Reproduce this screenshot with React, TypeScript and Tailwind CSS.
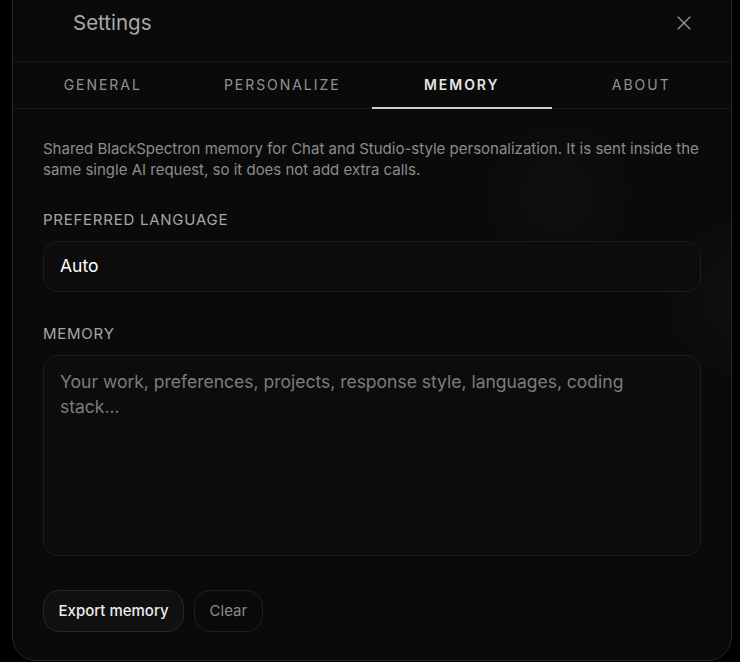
import { X } from "lucide-react";

const TABS = ["General", "Personalize", "Memory", "About"];

export default function App() {
    const active = "Memory";

    return (
        <div className="relative h-[662px] w-[740px] overflow-hidden bg-black font-['Inter','Liberation_Sans',sans-serif]">
            <div className="relative -mt-[21px] ml-3 flex w-[720px] flex-col overflow-hidden rounded-[24px] border border-[#232323] bg-[#0a0a0a]">
                {/* soft glows */}
                <div className="pointer-events-none absolute left-[510px] top-[180px] h-[70px] w-[70px] rounded-full bg-white/[0.07] blur-2xl" />
                <div className="pointer-events-none absolute left-[690px] top-[270px] h-24 w-20 rounded-full bg-white/[0.05] blur-2xl" />

                {/* Header */}
                <div className="relative flex h-[82px] items-end justify-between border-b border-[#171717] pb-[24px] pl-[60px] pr-[33px]">
                    <h2 className="text-[20.5px] leading-7 text-[#a8a8a8]">Settings</h2>
                    <button className="flex h-7 w-7 items-center justify-center text-[#9a9a9a]">
                        <X size={24} strokeWidth={1.3} />
                    </button>
                </div>

                {/* Tabs */}
                <div className="relative grid h-[47px] grid-cols-4 border-b border-[#171717]">
                    {TABS.map((tab) => {
                        const isActive = tab === active;
                        return (
                            <button
                                key={tab}
                                className={`relative flex items-center justify-center pb-[2px] text-[14px] uppercase tracking-[0.14em] ${
                                    isActive ? "font-semibold text-[#e6e6e6]" : "text-[#929292]"
                                }`}
                            >
                                {tab}
                                {isActive && (
                                    <span className="absolute inset-x-0 -bottom-px h-[2px] bg-[#cfcfcf]" />
                                )}
                            </button>
                        );
                    })}
                </div>

                {/* Body */}
                <div className="relative flex flex-col px-[30px] pb-[28px] pt-[29px]">
                    <p className="text-[15px] leading-[21px] text-[#8c8c8c]">
                        Shared BlackSpectron memory for Chat and Studio-style personalization. It is sent inside the
                        same single AI request, so it does not add extra calls.
                    </p>

                    <label className="mt-[30px] text-[15px] uppercase leading-5 tracking-[0.05em] text-[#a6a6a6]">
                        Preferred language
                    </label>
                    <div className="mt-[11px] flex h-[51px] items-center rounded-[14px] border border-[#1c1c1c] bg-[#0c0c0c] px-4 text-[17.5px] text-white">
                        Auto
                    </div>

                    <label className="mt-[32px] text-[15px] uppercase leading-5 tracking-[0.05em] text-[#a6a6a6]">
                        Memory
                    </label>
                    <textarea
                        className="mt-[11px] h-[201px] resize-none rounded-[14px] border border-[#1c1c1c] bg-[#0c0c0c] px-4 py-[13px] text-[17.5px] leading-[25px] text-white outline-none placeholder:text-[#7c7c7c]"
                        placeholder="Your work, preferences, projects, response style, languages, coding stack..."
                    />

                    <div className="mt-[34px] flex gap-[10px]">
                        <button className="h-[42px] rounded-[16px] border border-[#262626] bg-[#101010] px-[14.5px] text-[15px] font-medium text-[#ededed]">
                            Export memory
                        </button>
                        <button className="h-[42px] rounded-[16px] border border-[#1f1f1f] bg-[#0a0a0a] px-[14.5px] text-[15px] text-[#8a8a8a]">
                            Clear
                        </button>
                    </div>
                </div>
            </div>
        </div>
    );
}
